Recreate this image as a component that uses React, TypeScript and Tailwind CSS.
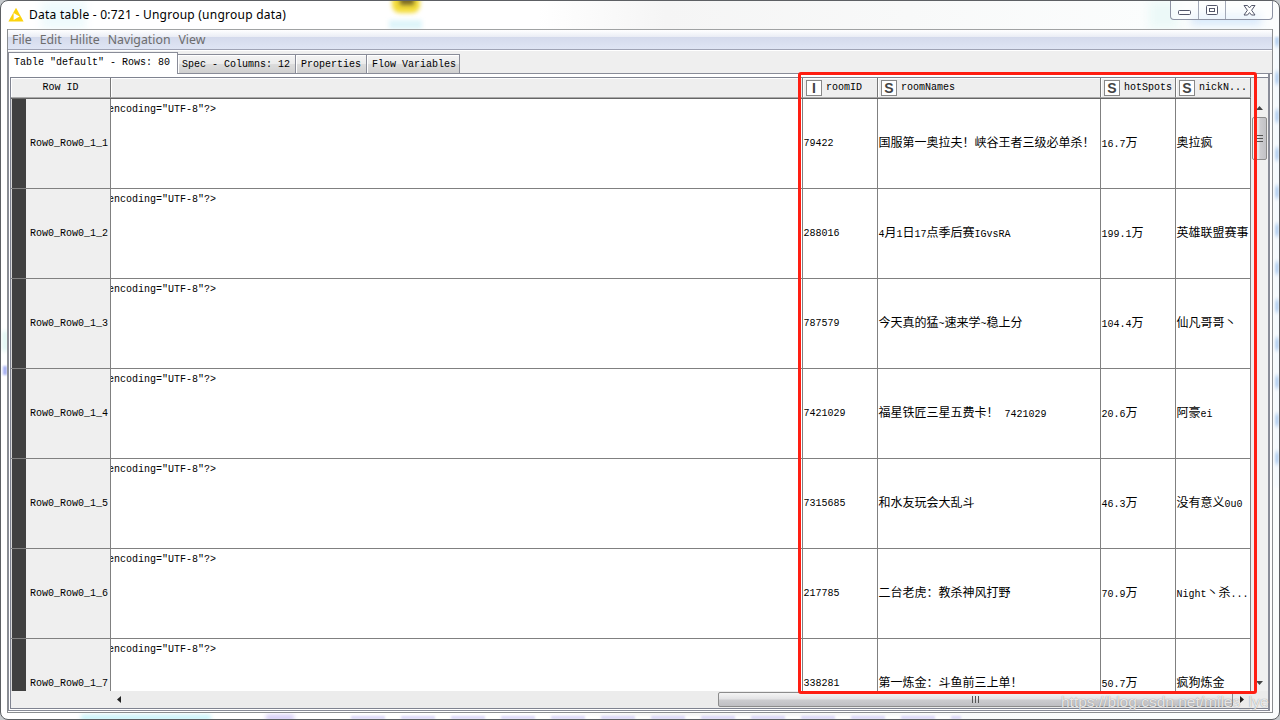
import { Fragment } from "react";

const rows = [
  { id: "Row0_Row0_1_1", room: "79422", name: "国服第一奥拉夫！峡谷王者三级必单杀！", hot: "16.7万", nick: "奥拉疯" },
  { id: "Row0_Row0_1_2", room: "288016", name: "4月1日17点季后赛IGvsRA", hot: "199.1万", nick: "英雄联盟赛事" },
  { id: "Row0_Row0_1_3", room: "787579", name: "今天真的猛~速来学~稳上分", hot: "104.4万", nick: "仙凡哥哥丶" },
  { id: "Row0_Row0_1_4", room: "7421029", name: "福星铁匠三星五费卡！ 7421029", hot: "20.6万", nick: "阿豪ei" },
  { id: "Row0_Row0_1_5", room: "7315685", name: "和水友玩会大乱斗", hot: "46.3万", nick: "没有意义0u0" },
  { id: "Row0_Row0_1_6", room: "217785", name: "二台老虎：教杀神风打野", hot: "70.9万", nick: "Night丶杀..." },
  { id: "Row0_Row0_1_7", room: "338281", name: "第一炼金：斗鱼前三上单！", hot: "50.7万", nick: "疯狗炼金" },
];

const columns = [
  { type: "I", label: "roomID" },
  { type: "S", label: "roomNames" },
  { type: "S", label: "hotSpots" },
  { type: "S", label: "nickN..." },
];

const tabs = [
  { label: "Spec - Columns: 12", width: "w-[118px] pl-[4px]" },
  { label: "Properties", width: "w-[71px] pl-[5px]" },
  { label: "Flow Variables", width: "w-[93px] pl-[5px]" },
];
const menu = ["File", "Edit", "Hilite", "Navigation", "View"];

const grid = "grid grid-cols-[100px_692px_75px_223px_75px_75px]";
const mono = "font-['Liberation_Mono','Noto_Sans_CJK_SC',monospace] text-[10px] whitespace-pre";

// Latin glyphs are half the width of the 12px Chinese ones
function Text({ children }: { children: string }) {
  return (
    <>
      {children.split(/([\u3000-\uffff]+)/).map((part, i) =>
        i % 2 ? (
          <span key={i} className="text-[12px]">{part}</span>
        ) : (
          <Fragment key={i}>{part}</Fragment>
        )
      )}
    </>
  );
}

function TitleBar() {
  return (
    <div className="h-7 shrink-0 flex justify-between pl-[7px] pr-[6px] relative">
      <div className="flex items-center gap-[5px]">
        <svg width="16" height="16" viewBox="0 0 16 16">
          <path d="M8 0.8 15.6 14.6H0.4z" fill="#fcd30c" />
          <path d="M5.6 6v7l6-3.5z" fill="#fff" />
        </svg>
        <span className="text-[12px] text-black whitespace-nowrap tracking-[0.24px]">
          Data table - 0:721 - Ungroup (ungroup data)
        </span>
      </div>
      <div className="flex h-[19px] rounded-b-[4px] border border-t-0 border-[#8d93a3] bg-white/50">
        <div className="w-[28px] border-r border-[#a3a9b8] flex justify-center items-center">
          <svg width="13" height="12" viewBox="0 0 13 12">
            <rect x="0.5" y="6.5" width="12" height="4" rx="1" fill="#fff" stroke="#53576a" />
          </svg>
        </div>
        <div className="w-[27px] border-r border-[#a3a9b8] flex justify-center items-center">
          <svg width="12" height="10" viewBox="0 0 12 10">
            <rect x="0.5" y="0.5" width="11" height="9" rx="1" fill="#fff" stroke="#53576a" />
            <rect x="3.5" y="3.5" width="5" height="3" fill="#fff" stroke="#53576a" />
          </svg>
        </div>
        <div className="w-[46px] flex justify-center items-center">
          <svg width="13" height="11" viewBox="0 0 13 11">
            <path
              d="M1 .5h3.500l2 2.400L8.500.500H12L8.600 5.250 12 10H8.500L6.500 7.600 4.500 10H1l3.400-4.750z"
              fill="#fff"
              stroke="#53576a"
            />
          </svg>
        </div>
      </div>
    </div>
  );
}

function MenuBar() {
  return (
    <div className="h-[21px] shrink-0 border-t border-[#a0a2a3] border-b border-b-[#9fa3b5] bg-[linear-gradient(#ffffff_0%,#eaedf5_36%,#d4daec_38%,#dfe5f4_100%)] flex items-center gap-[8px] pl-1 pt-[2px] text-[12.300px] text-[#6d6d6d]">
      {menu.map((item) => (
        <span key={item}>{item}</span>
      ))}
    </div>
  );
}

function Tabs() {
  return (
    <div className={`h-[23px] shrink-0 flex items-end bg-[#efefef] border-b border-[#898c98] relative ${mono}`}>
      <div className="w-[170px] h-[22px] -mb-px bg-white border border-b-0 border-[#898c98] pl-[5px] leading-[20px]">
        {'Table "default" - Rows: 80'}
      </div>
      {tabs.map((tab) => (
        <div
          key={tab.label}
          className={`${tab.width} h-[19px] border border-l-0 border-b-0 border-[#898c98] bg-[linear-gradient(#f4f4f4_0%,#ebebeb_48%,#dcdcdc_52%,#d0d0d0_100%)] leading-[20px] shadow-[inset_1px_1px_0_#fff]`}
        >
          {tab.label}
        </div>
      ))}
    </div>
  );
}

function Header() {
  return (
    <div className={`${grid} ${mono} h-[21px] shrink-0 w-[1240px] bg-[#eeeeee] border-b border-[#656565]`}>
      <div className="border-r border-[#777] border-b border-b-[#aaa] text-center leading-[19px] shadow-[inset_1px_1px_0_#fff]">
        Row ID
      </div>
      <div className="border-r border-[#777] border-b border-b-[#aaa] shadow-[inset_1px_1px_0_#fff]" />
      {columns.map((col) => (
        <div
          key={col.label}
          className="border-r border-[#777] border-b border-b-[#aaa] shadow-[inset_1px_1px_0_#fff] flex items-center pl-[3px] gap-1 overflow-hidden"
        >
          <span className="w-4 h-4 shrink-0 border border-[#888] bg-white text-[#444] font-['Liberation_Sans',sans-serif] font-bold text-[14px] leading-[15px] text-center">
            {col.type}
          </span>
          <span>{col.label}</span>
        </div>
      ))}
    </div>
  );
}

function Body() {
  return (
    <div className="h-[592px] w-[1240px] overflow-hidden bg-white">
      {rows.map((row) => (
        <div
          key={row.id}
          className={`${grid} grid-rows-[89px] ${mono} h-[90px] border-b border-[#808080] leading-[89px] text-black`}
        >
          <div className="border-r border-[#808080] bg-[#efefef] flex">
            <div className="w-[15px] bg-[#404040] border-l border-[#d8d8d8]" />
            <span className="pl-[4px]">{row.id}</span>
          </div>
          <div className="border-r border-[#808080] overflow-hidden leading-[21px]">
            <span className="-ml-[3px]">{'encoding="UTF-8"?>'}</span>
          </div>
          {[row.room, row.name, row.hot, row.nick].map((value, i) => (
            <div key={i} className="border-r border-[#808080] pl-[0.5px] overflow-hidden leading-[90px]">
              <Text>{value}</Text>
            </div>
          ))}
        </div>
      ))}
    </div>
  );
}

function VerticalScrollbar() {
  return (
    <div className="w-[17px] bg-[#f0f0f0] flex flex-col items-center pt-[28px] pb-[6px]">
      <svg width="7" height="4" viewBox="0 0 7 4">
        <path d="M3.500 0 7 4H0z" fill="#444" />
      </svg>
      <div className="mt-[7px] w-[15px] h-[43px] border border-[#8c8c8c] rounded-[2px] bg-[linear-gradient(90deg,#f5f5f5,#e2e2e4_48%,#cdcdd0_52%,#c2c2c6)] flex flex-col items-center justify-center gap-[2px]">
        <i className="w-[7px] h-px bg-[#555]" />
        <i className="w-[7px] h-px bg-[#555]" />
        <i className="w-[7px] h-px bg-[#555]" />
      </div>
      <svg className="mt-auto" width="7" height="4" viewBox="0 0 7 4">
        <path d="M0 0h7L3.500 4z" fill="#444" />
      </svg>
    </div>
  );
}

function HorizontalScrollbar() {
  return (
    <div className="h-[17px] shrink-0 bg-[#ececec] flex">
      <div className="w-[99px] bg-[#efefef]" />
      <div className="w-[17px] flex items-center justify-center">
        <svg width="4" height="7" viewBox="0 0 4 7">
          <path d="M4 0v7L0 3.500z" fill="#222" />
        </svg>
      </div>
      <div className="ml-[591px] mt-px w-[515px] h-[15px] border border-[#8c8c8c] rounded-[2px] bg-[linear-gradient(#f5f5f5,#e2e2e4_48%,#cdcdd0_52%,#bfbfc3)] flex items-center justify-center gap-[2px]">
        <i className="w-px h-[7px] bg-[#555]" />
        <i className="w-px h-[7px] bg-[#555]" />
        <i className="w-px h-[7px] bg-[#555]" />
      </div>
      <div className="w-[17px] flex items-center justify-center">
        <svg width="4" height="7" viewBox="0 0 4 7">
          <path d="M0 0v7l4-3.500z" fill="#222" />
        </svg>
      </div>
    </div>
  );
}

// Desktop colours showing through the glass frame
function Glass() {
  return (
    <div className="absolute inset-0 overflow-hidden">
      <div className="absolute left-[391px] -top-3 w-[28px] h-[24px] rounded-lg bg-[#f3dc3a] blur-[2px]" />
      <div className="absolute left-[399px] -top-2 w-[14px] h-[12px] bg-[#7b6a25] blur-[2px]" />
      <div className="absolute left-[388px] top-[19px] w-[33px] h-[9px] bg-[#dff5fa] blur-[2px]" />
      <div className="absolute left-[40px] top-0 w-[45px] h-[28px] bg-[#eefafd] blur-[4px]" />
      <div className="absolute left-[1148px] top-0 w-[30px] h-[28px] bg-[#ecf9f8] blur-[4px]" />
      <div className="absolute left-[1190px] top-[12px] w-[70px] h-[12px] bg-[#d7e8fa] blur-[4px]" />
      <div className="absolute left-[80px] top-[714px] w-[130px] h-[5px] bg-[#c2f1fa] blur-[2px]" />
      <div className="absolute left-[265px] top-[714px] w-[28px] h-[5px] bg-[#cfc6f5] blur-[2px]" />
      <div className="absolute left-[350px] top-[715px] w-[610px] h-[3px] bg-[repeating-linear-gradient(90deg,#d8d4f8_0_34px,#fff_34px_50px)] blur-[1px]" />
      <div className="absolute left-[2px] top-[330px] w-[4px] h-[20px] bg-[#d5f3ee] blur-[2px]" />
      <div className="absolute left-[2px] top-[365px] w-[4px] h-[9px] bg-[#a5b0f3] blur-[1px]" />
      <div className="absolute left-[1274px] top-[36px] w-[4px] h-[450px] bg-[repeating-linear-gradient(#b7d3f2_0_6px,#f4fafe_12px_32px,#b7d3f2_38px)] blur-[1px]" />
    </div>
  );
}

export default function App() {
  return (
    <div className="w-[1280px] h-[720px] bg-[#c5c9cc] overflow-hidden">
      <div className="relative w-full h-full rounded-[8px] border border-[#5d6064] bg-[linear-gradient(90deg,#fff_0%,#fff_42%,#f5f5f5_52%,#fbfdfd_90%)] overflow-hidden font-['Noto_Sans','Noto_Sans_CJK_SC',sans-serif] flex flex-col">
        <Glass />
        <TitleBar />
        <div className="relative mx-[6px] h-[684px] border-x border-b border-[#8a8d90] bg-white flex flex-col">
          <MenuBar />
          <div className="h-px shrink-0 bg-white" />
          <Tabs />
          <div className="h-[637px] mr-[2px] border-l border-r-2 border-b border-[#898c98] pt-[3px] pl-px pb-px flex flex-col">
            <div className="h-[632px] shrink-0 border border-r-0 border-[#7f8390] flex flex-col">
              <div className="flex h-[613px] shrink-0">
                <div className="flex flex-col">
                  <Header />
                  <Body />
                </div>
                <VerticalScrollbar />
              </div>
              <HorizontalScrollbar />
            </div>
          </div>
        </div>

        <div className="absolute left-[797px] top-[71px] w-[459px] h-[622px] border-3 border-[#ff1e12] rounded-[3px]" />
        <div className="absolute left-[1060px] top-[691px] font-['Liberation_Sans',sans-serif] text-[15.500px] leading-[20px] text-white/80 whitespace-nowrap [text-shadow:0_0_1px_#777]">
          https://blog.csdn.net/miles_lye
        </div>
      </div>
    </div>
  );
}
